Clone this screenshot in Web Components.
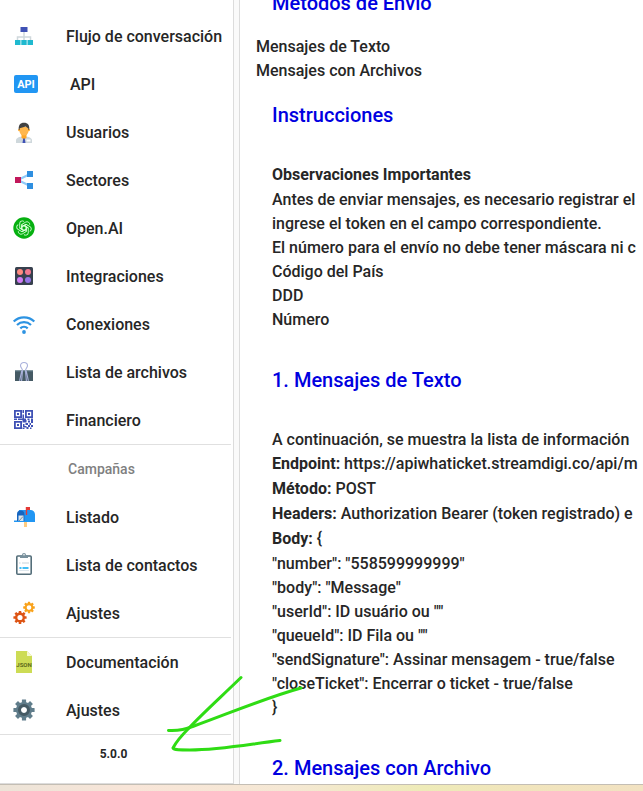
<!DOCTYPE html>
<html lang="es">
<head>
<meta charset="utf-8">
<title>API - Mensajes</title>
<style>
html,body{margin:0;height:100%}
body{font-family:Roboto,"Liberation Sans",sans-serif;font-weight:500;font-size:16px;line-height:24px;color:#262626;background:#fff;overflow:hidden}
</style>
</head>
<body>
<app-shell>
  <side-nav slot="nav">
    <nav-item icon="flow">Flujo de conversación</nav-item>
    <nav-item icon="api" class="shifted">API</nav-item>
    <nav-item icon="user">Usuarios</nav-item>
    <nav-item icon="share">Sectores</nav-item>
    <nav-item icon="openai">Open.AI</nav-item>
    <nav-item icon="grid">Integraciones</nav-item>
    <nav-item icon="wifi">Conexiones</nav-item>
    <nav-item icon="clip">Lista de archivos</nav-item>
    <nav-item icon="qr">Financiero</nav-item>
    <nav-divider></nav-divider>
    <nav-heading>Campañas</nav-heading>
    <nav-item icon="mailbox">Listado</nav-item>
    <nav-item icon="clipboard">Lista de contactos</nav-item>
    <nav-item icon="gears">Ajustes</nav-item>
    <nav-divider></nav-divider>
    <nav-item icon="json">Documentación</nav-item>
    <nav-item icon="gear">Ajustes</nav-item>
    <nav-divider></nav-divider>
    <app-version>5.0.0</app-version>
  </side-nav>
  <doc-page></doc-page>
</app-shell>
<green-arrow></green-arrow>

<script>
const icons = {
flow:`<path d="M12 8v5M5.500 17v-4h13v4M12 13v4" fill="none" stroke="#cfd8dc" stroke-width="1.500"/><path fill="#3f51b5" d="M8.500 3h7v5h-7z"/><path fill="#1fb9cf" d="M3 16h5.500v5H3zM9.300 16h5.400v5H9.300zM15.500 16H21v5h-5.500z"/>`,
api:`<rect x="2" y="3" width="24" height="18" rx="2" fill="#2196f3"/><text x="14" y="16" text-anchor="middle" font-size="11" font-weight="700" fill="#fff">API</text>`,
user:`<path fill="#cfd8dc" d="M4 23v-2.500c0-2.500 3-4 8-4s8 1.500 8 4V23z"/><path fill="#ffa726" d="M9.500 13h5v4.500L12 20l-2.500-2.500z"/><path fill="#3f51b5" d="M11.200 18.500h1.600l.7 4.500h-3z"/><circle cx="7.300" cy="10" r="1.200" fill="#ffa726"/><circle cx="16.700" cy="10" r="1.200" fill="#ffa726"/><path fill="#ffb74d" d="M7.500 7h9v4a4.500 4.500 0 0 1-9 0z"/><path fill="#424242" d="M12 2.800c-4 0-5.500 2.500-5.300 6.700l1 .6V8.300l6-1.800 2.600 2v1.600l1-.6C17.500 5 16 2.800 12 2.800z"/><path fill="#fff" d="M14.500 19.500h4v2h-4z"/>`,
share:`<path d="M6 12l12-6M6 12l12 6" stroke="#90caf9" stroke-width="2"/><path fill="#c2185b" d="M3 9h6v6H3z"/><path fill="#2f8fe0" d="M15 3h6v6h-6zM15 15h6v6h-6z"/>`,
openai:`<circle cx="12" cy="12" r="10.700" fill="#06b010"/><g fill="none" stroke="#d8ffd8" stroke-width=".9" stroke-linejoin="round">${[0,60,120,180,240,300].map(a=>`<path transform="rotate(${a} 12 12)" d="M10 13.200V8.300l3.700-2.200a2.700 2.700 0 0 1 4 2.600M10 10.500l2-1.200 4.500 2.600"/>`).join('')}</g>`,
grid:`<rect x="3" y="3" width="18" height="18" rx="1.500" fill="#37404e"/><circle cx="8" cy="8" r="3" fill="#ff8a80"/><circle cx="16" cy="8" r="3" fill="#f2788f"/><circle cx="8" cy="16" r="3" fill="#d17cf5"/><circle cx="16" cy="16" r="3" fill="#9575e8"/>`,
wifi:`<g fill="none" stroke="#2d93e2" stroke-width="2.200"><path d="M1.700 9.500a15 15 0 0 1 20.600 0"/><path d="M5 13a10.200 10.200 0 0 1 14 0"/><path d="M8.300 16.400a5.400 5.400 0 0 1 7.400 0"/></g><circle cx="12" cy="20" r="1.900" fill="#2d93e2"/>`,
clip:`<path fill="#455a64" d="M3 10.500h18V21H3z"/><path fill="#607d8b" d="M3 10.500h18v1H3z"/><path d="M9.600 21l.9-10c.3-2-2-3.500-2-5.300 0-2 1.400-3.200 3.500-3.200s3.500 1.200 3.500 3.200c0 1.800-2.300 3.300-2 5.300l.9 10M9.800 10.500L7.600 20.800M14.200 10.500l2.200 10.300" fill="none" stroke="#aab2dc" stroke-width="1.100"/>`,
mailbox:`<path fill="#ffcc80" d="M12 14h3v8h-3z"/><path fill="#2196f3" d="M7 5h11.500A4.500 4.500 0 0 1 23 9.500V17H2v-1.500h3z"/><path fill="#1565c0" d="M5 16V9.200a3.700 3.700 0 0 1 7.400 0V16z"/><path fill="#d5e3ee" d="M6.500 10.500h5V16h-5z"/><path d="M7 16l4-4.500" stroke="#78909c"/><path fill="#e53935" d="M13.800 2H18v3h-2.800v5h-1.400z"/>`,
clipboard:`<rect x="4.800" y="3" width="14.400" height="18.200" rx="1" fill="#fff" stroke="#546e7a" stroke-width="1.600"/><path fill="#78909c" d="M8 2h2a2 2 0 0 1 4 0h2v3H8z"/><circle cx="12" cy="1.800" r=".8" fill="#fff"/><path d="M7 10h1.500M10 10h7" stroke="#c7d3da"/><path d="M7.500 15h2M10.500 15h6" stroke="#03a9f4" stroke-width="1.500"/><path d="M7 17.500h10" stroke="#dde7ed"/>`,
json:`<path fill="#cddc55" d="M4 1h11l5 5v17H4z"/><path fill="#f5f9cf" d="M15 1l5 5h-5z"/><text x="12" y="16.500" text-anchor="middle" font-size="6" font-weight="700" fill="#5d6b1c">JSON</text>`
};
const gear=(x,y,r,teeth,w,hole,c)=>`<g transform="translate(${x} ${y})" fill="${c}">${Array.from({length:teeth},(_,i)=>`<rect x="${-w/2}" y="${-r}" width="${w}" height="${r*.5}" rx=".4" transform="rotate(${i*360/teeth})"/>`).join('')}<circle r="${(r*.76+hole)/2}" fill="none" stroke="${c}" stroke-width="${r*.76-hole}"/></g>`;
icons.gears=gear(17,6.500,5.800,8,2.300,2.300,'#f9a21b')+gear(8,16.500,6.600,8,2.600,2.600,'#dd5414');
icons.gear=gear(12,12,10.600,8,4.200,3,'#607d8b')+`<circle cx="12" cy="12" r="4.500" fill="none" stroke="#455a64" stroke-width="3"/>`;
const finder=(x,y)=>`<path fill-rule="evenodd" d="M${x} ${y}h8v8h-8zM${x+1.8} ${y+1.8}v4.400h4.400v-4.400z"/><path d="M${x+3} ${y+3}h2v2h-2z"/>`;
icons.qr=`<g fill="#3f51b5">${finder(2,2)}${finder(13,2)}${finder(2,13)}<path d="M10.500 2h1.500v3h-1.500zM10.500 6.500h1.500v4h-1.500zM2 10.500h3v1.500H2zM6 10.500h8v1.500H6zM15.500 10.500h2v1.500h-2zM19 10.500h2v3h-2zM10.500 12h4v2.500h-4zM16 12.500h2v2h-2zM11 16h1.500v3H11zM13.500 15h2.500v2h-2.500zM17.500 15h1.500v2h-1.500zM19 13.500h2v1.500h-2zM16 17h2v2h-2zM19 17h2v2h-2zM12.500 18h2v1.500h-2zM10.500 19.500h2V21h-2zM14.500 19h2v2h-2zM18 19.500h1.500V21H18z"/></g>`;

function define(name, html){
  const t=document.createElement('template'); t.innerHTML=html;
  customElements.define(name, class extends HTMLElement{
    constructor(){super();this.attachShadow({mode:'open'}).append(t.content.cloneNode(true));}
  });
}

define('app-shell',`<style>
:host{display:flex;flex-direction:column;height:100vh}
.main{flex:1;min-height:0;display:grid;grid-template-columns:233px minmax(0,1fr);border-bottom:1px solid #c4beb4}
aside{min-height:0;overflow:hidden;border-bottom:1px solid #dcdcdc}
main{min-width:0;min-height:0;overflow:hidden;border-left:1px solid #dcdcdc;display:flex}
main::before{content:"";flex:0 0 5px;background:#fafafa;border-right:1px solid #dcdcdc}
main ::slotted(*){flex:1;min-width:0}
.strip{height:6px;background:linear-gradient(90deg,#ece4d8,#f8e5d8 20%,#f5e8d4 45%,#eeebb8 66%,#f1e5bc 80%,#f2e2c2)}
</style><div class="main"><aside><slot name="nav"></slot></aside><main><slot></slot></main></div><div class="strip"></div>`);
define('side-nav',`<style>:host{display:block;padding:12px 2px 0 0}nav{display:flex;flex-direction:column}</style><nav><slot></slot></nav>`);
define('nav-divider',`<style>:host{display:block;height:1px;background:#e0e0e0}</style>`);
define('nav-heading',`<style>:host{display:block;padding-left:68px;font-size:14px;line-height:48px;color:#808080}</style><slot></slot>`);
define('app-version',`<style>:host{display:block;padding:7px 4px 0 0;text-align:center;font-size:12px;font-weight:700}</style><slot></slot>`);
customElements.define('nav-item', class extends HTMLElement{
  connectedCallback(){
    if(this.shadowRoot)return;
    this.attachShadow({mode:'open'}).innerHTML=`<style>
:host{display:block}
a{display:flex;align-items:center;gap:30px;height:48px;padding-left:12px;color:inherit;text-decoration:none;white-space:nowrap}
:host(.shifted) a{gap:34px}
svg{flex:none;width:24px;height:24px;overflow:visible}
span{padding-top:2px}
</style><a href="#"><svg viewBox="0 0 24 24" aria-hidden="true">${icons[this.getAttribute('icon')]}</svg><span><slot></slot></span></a>`;
  }
});
define('doc-page',`<style>
:host{display:block;padding:0 0 0 32px;white-space:nowrap;overflow:hidden}
h2{margin:32px 0;font-size:20px;line-height:32px;font-weight:500;color:#0000e0}
h2:first-of-type{margin:-13px 0 16px}
p{margin:0}
b{font-weight:700}
.tall{height:25px}
ul{list-style:none;margin:0 0 16px -16px;padding:0}
ul+h2{margin-top:0}
</style>
<h2>Métodos de Envio</h2>
<ul><li>Mensajes de Texto</li><li>Mensajes con Archivos</li></ul>
<h2>Instrucciones</h2>
<p class="tall"><b>Observaciones Importantes</b></p>
<p>Antes de enviar mensajes, es necesario registrar el</p>
<p>ingrese el token en el campo correspondiente.</p>
<p>El número para el envío no debe tener máscara ni c</p>
<p>Código del País</p><p>DDD</p><p>Número</p>
<h2>1. Mensajes de Texto</h2>
<p>A continuación, se muestra la lista de información</p>
<p class="tall"><b>Endpoint:</b> https://apiwhaticket.streamdigi.co/api/m</p>
<p class="tall"><b>Método:</b> POST</p>
<p class="tall"><b>Headers:</b> Authorization Bearer (token registrado) e</p>
<p class="tall"><b>Body:</b> {</p>
<p>"number": "558599999999"</p><p>"body": "Message"</p><p>"userId": ID usuário ou ""</p><p>"queueId": ID Fila ou ""</p><p>"sendSignature": Assinar mensagem - true/false</p><p>"closeTicket": Encerrar o ticket - true/false</p><p>}</p>
<h2>2. Mensajes con Archivo</h2>`);
define('green-arrow',`<style>:host{position:absolute;left:164px;top:672px;width:144px;height:84px;pointer-events:none}svg{display:block}</style>
<svg width="144" height="84" viewBox="164 672 144 84" fill="none" stroke="#2fdc14" stroke-width="3" stroke-linecap="round" stroke-linejoin="round" aria-hidden="true"><path d="M241 677.500C222 696 203 713 190 727C182 735 177 740 173 748C174 750 180 750 190 750C220 750 250 744 280 740.500"/><path d="M168.500 730.500C180 731 186 729 194 726C230 713 265 698 301 688"/></svg>`);
</script>
</body>
</html>
